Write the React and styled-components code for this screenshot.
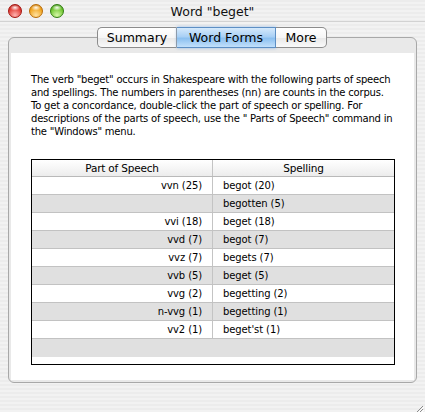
import React from "react";
import styled, { createGlobalStyle } from "styled-components";

const GlobalStyle = createGlobalStyle`
  html, body {
    margin: 0;
    padding: 0;
  }
  body {
    font-family: "DejaVu Sans", "Liberation Sans", sans-serif;
    color: #000;
  }
`;

const rows = [
  { pos: "vvn (25)", spelling: "begot (20)" },
  { pos: "", spelling: "begotten (5)" },
  { pos: "vvi (18)", spelling: "beget (18)" },
  { pos: "vvd (7)", spelling: "begot (7)" },
  { pos: "vvz (7)", spelling: "begets (7)" },
  { pos: "vvb (5)", spelling: "beget (5)" },
  { pos: "vvg (2)", spelling: "begetting (2)" },
  { pos: "n-vvg (1)", spelling: "begetting (1)" },
  { pos: "vv2 (1)", spelling: "beget'st (1)" },
];

const App = () => {
  return (
    <Window>
      <GlobalStyle />
      <TitleBar>
        <Lights>
          <Light color="red" />
          <Light color="orange" />
          <Light color="green" />
        </Lights>
        <Title>Word "beget"</Title>
        <span />
      </TitleBar>

      <Body>
        <Tabs>
          <Tab width={80}>Summary</Tab>
          <Tab width={99} active>
            Word Forms
          </Tab>
          <Tab width={51}>More</Tab>
        </Tabs>

        <GroupBox>
          <Panel>
            <Intro>
              The verb "beget" occurs in Shakespeare with the following parts of speech
              <br />
              and spellings. The numbers in parentheses (nn) are counts in the corpus.
              <br />
              To get a concordance, double-click the part of speech or spelling. For
              <br />
              descriptions of the parts of speech, use the " Parts of Speech" command in
              <br />
              the "Windows" menu.
            </Intro>

            <Table>
              <HeaderRow>
                <HeaderCell>Part of Speech</HeaderCell>
                <HeaderCell>Spelling</HeaderCell>
              </HeaderRow>
              {rows.map((r, i) => (
                <Row key={i} shaded={i % 2 === 1}>
                  <Cell align="right">{r.pos}</Cell>
                  <Cell>{r.spelling}</Cell>
                </Row>
              ))}
              <EmptyRow />
              <Filler />
            </Table>
          </Panel>
        </GroupBox>
      </Body>

      <Grip>
        <svg width="11" height="11" viewBox="0 0 11 11">
          <path d="M10 2 L2 10 M10 5 L5 10 M10 8 L8 10" stroke="#8a8a8a" strokeWidth="1" />
          <path d="M11 3 L3 11 M11 6 L6 11 M11 9 L9 11" stroke="#fff" strokeWidth="1" />
        </svg>
      </Grip>
    </Window>
  );
};

export default App;

const Window = styled.div`
  position: relative;
  width: 425px;
  height: 412px;
  overflow: hidden;
  background: repeating-linear-gradient(
    to bottom,
    #ececec 0px,
    #ececec 2px,
    #f2f2f2 2px,
    #f2f2f2 4px
  );
`;

const TitleBar = styled.div`
  display: grid;
  grid-template-columns: 1fr auto 1fr;
  align-items: center;
  height: 21px;
  border-bottom: 1px solid #d2d2d2;
`;

const Lights = styled.div`
  display: flex;
  gap: 7px;
  padding-left: 8px;
`;

const lightColors = {
  red: ["#ffb3b0", "#e0382f", "#a3140f"],
  orange: ["#ffe2a0", "#f0a21a", "#b96b06"],
  green: ["#d6f7a8", "#6bc42b", "#307d10"],
};

const Light = styled.span`
  width: 14px;
  height: 14px;
  border-radius: 50%;
  box-sizing: border-box;
  border: 1px solid ${(p) => lightColors[p.color][2]};
  background:
    radial-gradient(ellipse 5px 3px at 50% 22%, rgba(255, 255, 255, 0.95), rgba(255, 255, 255, 0) 100%),
    radial-gradient(circle at 50% 85%, ${(p) => lightColors[p.color][0]} 0%, ${(p) => lightColors[p.color][1]} 65%, ${(p) => lightColors[p.color][2]} 100%);
`;

const Title = styled.div`
  font-size: 12.5px;
  color: #111;
  padding-top: 1px;
`;

const Body = styled.div`
  padding: 5px 8px 0;
`;

const Tabs = styled.div`
  position: relative;
  z-index: 1;
  display: flex;
  justify-content: center;
  padding-right: 1px;
`;

const Tab = styled.div`
  width: ${(p) => p.width}px;
  box-sizing: border-box;
  height: 21px;
  line-height: 19px;
  text-align: center;
  font-size: 12.5px;
  border-top: 1px solid ${(p) => (p.active ? "#5d8fc4" : "#8c8c8c")};
  border-bottom: 1px solid ${(p) => (p.active ? "#5d8fc4" : "#8c8c8c")};
  border-right: 1px solid ${(p) => (p.active ? "#5d8fc4" : "#9c9c9c")};
  background: ${(p) =>
    p.active
      ? "linear-gradient(to bottom, #d5e9fb 0%, #a9d0f5 45%, #8cc0f0 55%, #c2e0fb 100%)"
      : "linear-gradient(to bottom, #ffffff 0%, #f6f6f6 50%, #e9e9e9 55%, #fafafa 100%)"};
  box-shadow: ${(p) => (p.active ? "0 0 3px rgba(90, 150, 220, 0.6)" : "none")};

  &:first-child {
    border-left: 1px solid #8c8c8c;
    border-radius: 5px 0 0 5px;
  }
  &:last-child {
    border-right: 1px solid #8c8c8c;
    border-radius: 0 5px 5px 0;
  }
`;

const GroupBox = styled.div`
  margin-top: -11px;
  height: 346px;
  box-sizing: border-box;
  border: 1px solid #a8a8a8;
  border-radius: 6px;
  background: #e9e9e9;
  padding: 15px 2px 2px;
`;

const Panel = styled.div`
  height: 100%;
  box-sizing: border-box;
  background: #fff;
  padding: 20px 19px 0 20px;
`;

const Intro = styled.p`
  margin: 0;
  font-size: 10px;
  line-height: 13px;
  white-space: nowrap;
  letter-spacing: -0.2px;
`;

const Table = styled.div`
  margin-top: 21px;
  border: 1px solid #000;
  background: #fff;
`;

const HeaderRow = styled.div`
  display: grid;
  grid-template-columns: 180px 1fr;
  height: 16px;
  border-bottom: 1px solid #b9b9b9;
  background: linear-gradient(to bottom, #ffffff 0%, #f6f6f6 50%, #ececec 100%);
`;

const HeaderCell = styled.div`
  font-size: 10.5px;
  letter-spacing: -0.2px;
  line-height: 16px;
  text-align: center;

  & + & {
    border-left: 1px solid #c4c4c4;
  }
`;

const Row = styled.div`
  display: grid;
  grid-template-columns: 180px 1fr;
  height: 17px;
  border-bottom: 1px solid #c2c2c2;
  background: ${(p) => (p.shaded ? "#e0e0e0" : "#ffffff")};
`;

const Cell = styled.div`
  font-size: 10px;
  letter-spacing: -0.1px;
  line-height: 17px;
  text-align: ${(p) => p.align || "left"};
  padding: ${(p) => (p.align === "right" ? "0 10px 0 0" : "0 0 0 10px")};

  & + & {
    border-left: 1px solid #c4c4c4;
  }
`;

const EmptyRow = styled.div`
  height: 18px;
  background: #e0e0e0;
`;

const Filler = styled.div`
  height: 7px;
`;

const Grip = styled.div`
  position: absolute;
  right: 1px;
  bottom: 1px;
  width: 11px;
  height: 11px;
`;
